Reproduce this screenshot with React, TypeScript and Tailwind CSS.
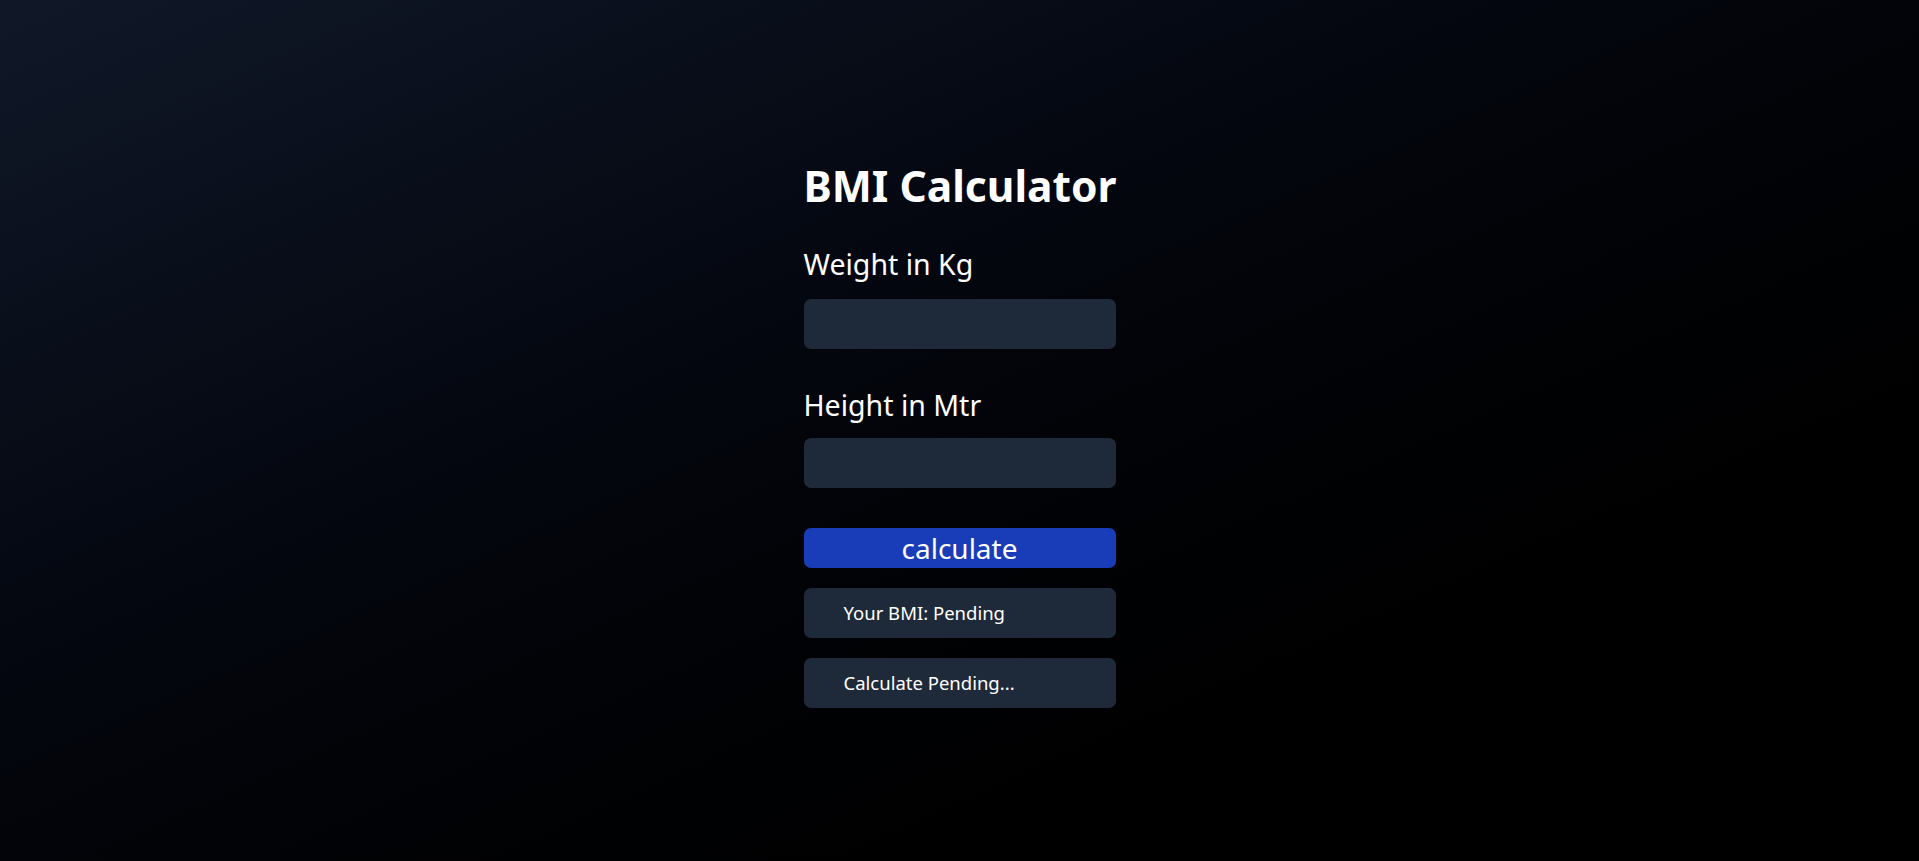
import { useState } from "react";

// Simple BMI calculator: weight (kg) / height (m)^2
export default function App() {
  const [weight, setWeight] = useState("");
  const [height, setHeight] = useState("");
  const [bmi, setBmi] = useState<string | null>(null);
  const [status, setStatus] = useState<string | null>(null);

  const calculate = () => {
    const w = parseFloat(weight);
    const h = parseFloat(height);
    if (!w || !h) return;
    const v = w / (h * h);
    setBmi(v.toFixed(2));
    if (v < 18.5) setStatus("Underweight");
    else if (v < 25) setStatus("Normal");
    else if (v < 30) setStatus("Overweight");
    else setStatus("Obese");
  };

  return (
    <div
      className="min-h-screen w-full bg-linear-to-br from-gray-900 to-black flex justify-center"
      style={{ fontFamily: '"Noto Sans", "Open Sans", sans-serif' }}
    >
      <div className="w-[312px] flex flex-col pt-[163px] text-white">
        <h1 className="text-[42.5px] leading-[45px] font-bold whitespace-nowrap">BMI Calculator</h1>

        <label className="mt-[42px] text-[28.5px] leading-[28px]">Weight in Kg</label>
        <input
          type="number"
          value={weight}
          onChange={(e) => setWeight(e.target.value)}
          className="mt-[21px] h-[50px] w-full rounded-[7px] bg-gray-800 px-4 text-[20px] text-white outline-none"
        />

        <label className="mt-[42px] text-[28.5px] leading-[28px]">Height in Mtr</label>
        <input
          type="number"
          value={height}
          onChange={(e) => setHeight(e.target.value)}
          className="mt-[19px] h-[50px] w-full rounded-[7px] bg-gray-800 px-4 text-[20px] text-white outline-none"
        />

        <button
          onClick={calculate}
          className="mt-[40px] h-[40px] w-full rounded-[7px] bg-blue-800 text-[28px] leading-[40px] text-white"
        >
          calculate
        </button>

        <div className="mt-[20px] h-[50px] rounded-[7px] bg-gray-800 pl-[40px] text-[18.5px] leading-[50px]">
          Your BMI: {bmi ?? "Pending"}
        </div>
        <div className="mt-[20px] h-[50px] rounded-[7px] bg-gray-800 pl-[40px] text-[18.5px] leading-[50px]">
          {status ?? "Calculate Pending..."}
        </div>
      </div>
    </div>
  );
}
